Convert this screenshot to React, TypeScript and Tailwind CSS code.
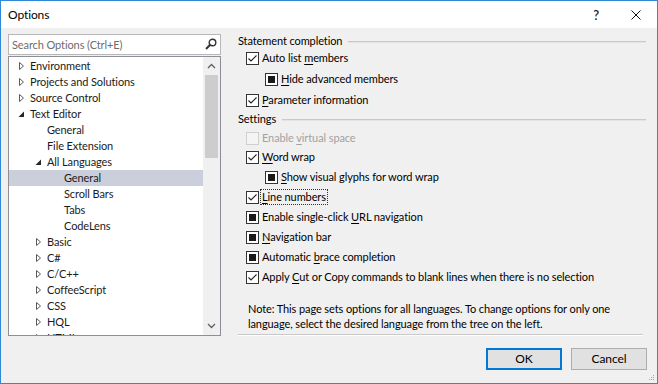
import React from "react";

type Node = { label: string; level: number; kind: "closed" | "open" | "leaf"; selected?: boolean };

const tree: Node[] = [
  { label: "Environment", level: 0, kind: "closed" },
  { label: "Projects and Solutions", level: 0, kind: "closed" },
  { label: "Source Control", level: 0, kind: "closed" },
  { label: "Text Editor", level: 0, kind: "open" },
  { label: "General", level: 1, kind: "leaf" },
  { label: "File Extension", level: 1, kind: "leaf" },
  { label: "All Languages", level: 1, kind: "open" },
  { label: "General", level: 2, kind: "leaf", selected: true },
  { label: "Scroll Bars", level: 2, kind: "leaf" },
  { label: "Tabs", level: 2, kind: "leaf" },
  { label: "CodeLens", level: 2, kind: "leaf" },
  { label: "Basic", level: 1, kind: "closed" },
  { label: "C#", level: 1, kind: "closed" },
  { label: "C/C++", level: 1, kind: "closed" },
  { label: "CoffeeScript", level: 1, kind: "closed" },
  { label: "CSS", level: 1, kind: "closed" },
  { label: "HQL", level: 1, kind: "closed" },
  { label: "HTML", level: 1, kind: "closed" },
];

const indent = ["pl-[9px]", "pl-[26px]", "pl-[43px]"];

const Expander: React.FC<{ kind: Node["kind"] }> = ({ kind }) => {
  if (kind === "closed")
    return (
      <svg width="12" height="16" viewBox="0 0 12 16">
        <path d="M1.5 4.5 L5.5 8 L1.5 11.5 Z" fill="none" stroke="#5a5a5a" strokeWidth="1" />
      </svg>
    );
  if (kind === "open")
    return (
      <svg width="12" height="16" viewBox="0 0 12 16">
        <path d="M6 5.5 L6 11 L0.5 11 Z" fill="#262626" />
      </svg>
    );
  return <span className="w-[12px]" />;
};

const Check: React.FC<{ state: "on" | "mixed" | "off" }> = ({ state }) => (
  <span
    className={
      "flex h-[13px] w-[13px] shrink-0 items-center justify-center border " +
      (state === "off" ? "border-[#cfcfcf] bg-[#f4f4f4]" : "border-[#333333] bg-white")
    }
  >
    {state === "on" && (
      <svg width="11" height="11" viewBox="0 0 11 11">
        <path d="M1.5 5.5 L4 8 L9.5 2.5" fill="none" stroke="#222" strokeWidth="1.1" />
      </svg>
    )}
    {state === "mixed" && <span className="h-[7px] w-[7px] bg-[#1a1a1a]" />}
  </span>
);

const Option: React.FC<{
  state: "on" | "mixed" | "off";
  pre?: string;
  acc: string;
  post?: string;
  sub?: boolean;
  focus?: boolean;
  mt: string;
}> = ({ state, pre, acc, post, sub, focus, mt }) => (
  <div className={`flex h-[16px] items-center ${mt} ${sub ? "pl-[27px]" : "pl-[8px]"}`}>
    <Check state={state} />
    <span
      className={
        "whitespace-nowrap leading-[14px] " +
        (focus ? "ml-[1px] border border-dotted border-[#333] px-[1px]" : "ml-[3px]") +
        (state === "off" ? " text-[#a2a2a2]" : "")
      }
    >
      {pre}
      <span className="underline underline-offset-2">{acc}</span>
      {post}
    </span>
  </div>
);

const GroupHeader: React.FC<{ title: string; mt: string }> = ({ title, mt }) => (
  <div className={`flex h-[16px] items-center ${mt}`}>
    <span className="whitespace-nowrap">{title}</span>
    <div className="ml-[6px] mr-[11px] mt-[2px] flex-1 border-t border-b border-t-[#c9c9c9] border-b-[#e4e4e4]" />
  </div>
);

export default function App() {
  return (
    <div className="flex h-[384px] w-[658px] flex-col border border-[#3088d8] bg-[#f0f0f0] font-['Lato',sans-serif] text-[11px] leading-[16px] tracking-[-0.1px] text-black">
      {/* title bar */}
      <div className="flex h-[27px] items-center bg-white pl-[7px]">
        <span className="text-[12px]">Options</span>
        <span className="ml-auto mr-[32px] text-[13px] font-semibold text-[#222]">?</span>
        <svg className="mr-[16px]" width="10" height="10" viewBox="0 0 10 10">
          <path d="M0.5 0.5 L9.5 9.5 M9.5 0.5 L0.5 9.5" stroke="#111" strokeWidth="1" />
        </svg>
      </div>

      <div className="flex flex-1">
        {/* left column */}
        <div className="flex w-[229px] flex-col pl-[7px] pt-[6px]">
          <div className="flex h-[21px] w-[213px] items-center border border-[#b7b7b7] bg-white pl-[3px]">
            <span className="text-[#6d6d6d]">Search Options (Ctrl+E)</span>
            <svg className="ml-auto mr-[3px]" width="12" height="13" viewBox="0 0 12 13">
              <circle cx="7.5" cy="4.5" r="3.3" fill="none" stroke="#333" strokeWidth="1.4" />
              <path d="M5.2 6.8 L1 11" stroke="#333" strokeWidth="2" />
            </svg>
          </div>
          <div className="mt-[1px] flex h-[280px] w-[213px] border border-[#8d8f96] bg-white">
            <div className="flex-1 overflow-hidden pt-[1px]">
              {tree.map((n, i) => (
                <div
                  key={i}
                  className={`flex h-[16px] items-center ${indent[n.level]} ${n.selected ? "bg-[#cbcedb]" : ""}`}
                >
                  <Expander kind={n.kind} />
                  <span className="whitespace-nowrap text-[#1b1b1b]">{n.label}</span>
                </div>
              ))}
            </div>
            <div className="flex w-[17px] flex-col items-center bg-[#f0f0f0]">
              <svg className="mt-[6px]" width="9" height="6" viewBox="0 0 9 6">
                <path d="M1 5 L4.5 1.5 L8 5" fill="none" stroke="#606060" strokeWidth="1.3" />
              </svg>
              <div className="mt-[6px] h-[83px] w-[13px] bg-[#cdcdcd]" />
              <svg className="mb-[6px] mt-auto" width="9" height="6" viewBox="0 0 9 6">
                <path d="M1 1 L4.5 4.5 L8 1" fill="none" stroke="#606060" strokeWidth="1.3" />
              </svg>
            </div>
          </div>
        </div>

        {/* right column */}
        <div className="flex flex-1 flex-col pl-[8px]">
          <GroupHeader title="Statement completion" mt="mt-[5px]" />
          <Option state="on" pre="Auto list " acc="m" post="embers" mt="mt-[1px]" />
          <Option state="mixed" acc="H" post="ide advanced members" sub mt="mt-[5px]" />
          <Option state="on" acc="P" post="arameter information" mt="mt-[5px]" />
          <GroupHeader title="Settings" mt="mt-[3px]" />
          <Option state="off" pre="Enable " acc="v" post="irtual space" mt="mt-[3px]" />
          <Option state="on" acc="W" post="ord wrap" mt="mt-[3px]" />
          <Option state="mixed" acc="S" post="how visual glyphs for word wrap" sub mt="mt-[4px]" />
          <Option state="on" acc="L" post="ine numbers" focus mt="mt-[4px]" />
          <Option state="mixed" pre="Enable single-click " acc="U" post="RL navigation" mt="mt-[4px]" />
          <Option state="mixed" acc="N" post="avigation bar" mt="mt-[4px]" />
          <Option state="mixed" pre="Automatic " acc="b" post="race completion" mt="mt-[4px]" />
          <Option
            state="on"
            pre="Apply "
            acc="C"
            post="ut or Copy commands to blank lines when there is no selection"
            mt="mt-[4px]"
          />
          <p className="ml-[10px] mt-[16px] leading-[15px]">
            Note: This page sets options for all languages. To change options for only one
            <br />
            language, select the desired language from the tree on the left.
          </p>
          <div className="mr-[14px] mt-[3px] border-t border-b border-t-[#c9c9c9] border-b-white" />
          <div className="mr-[10px] mt-[12px] flex justify-end gap-[9px]">
            <button className="h-[22px] w-[76px] border-2 border-[#0078d7] bg-[#e1e1e1] text-[12px]">OK</button>
            <button className="h-[22px] w-[76px] border border-[#adadad] bg-[#e1e1e1] text-[12px]">Cancel</button>
          </div>
          <div className="mr-[2px] mt-auto mb-[2px] flex justify-end">
            <svg width="7" height="7" viewBox="0 0 7 7">
              <rect x="5" y="1" width="1" height="1" fill="#a0a0a0" />
              <rect x="3" y="3" width="1" height="1" fill="#a0a0a0" />
              <rect x="5" y="3" width="1" height="1" fill="#a0a0a0" />
              <rect x="1" y="5" width="1" height="1" fill="#a0a0a0" />
              <rect x="3" y="5" width="1" height="1" fill="#a0a0a0" />
              <rect x="5" y="5" width="1" height="1" fill="#a0a0a0" />
            </svg>
          </div>
        </div>
      </div>
    </div>
  );
}
